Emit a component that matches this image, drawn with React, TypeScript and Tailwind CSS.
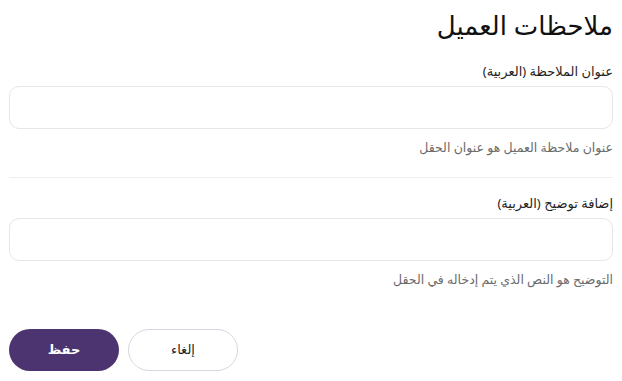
import React from "react";

const FONT = { fontFamily: '"Noto Sans", "DejaVu Sans", sans-serif' };

function Field({ label, hint }: { label: string; hint: string }) {
  return (
    <div className="flex flex-col">
      <label className="text-[13px] leading-[18px] text-[#1f1f1f]">{label}</label>
      <input
        type="text"
        className="mt-[6px] h-[43px] w-full rounded-[10px] border border-[#e6e6e6] bg-white px-3 outline-none"
      />
      <p className="mt-[10px] text-[12.5px] leading-[18px] text-[#6b6b6b]">{hint}</p>
    </div>
  );
}

export default function App() {
  return (
    <div dir="rtl" style={FONT} className="min-h-screen w-full bg-white px-[9px] pt-[8px]">
      <h1 className="text-[26px] leading-[34px] font-normal text-[#111]">ملاحظات العميل</h1>

      <div className="mt-[20px]">
        <Field label="عنوان الملاحظة (العربية)" hint="عنوان ملاحظة العميل هو عنوان الحقل" />
      </div>

      <div className="mt-[20px] h-px w-full bg-[#f0f0f0]" />

      <div className="mt-[16px]">
        <Field label="إضافة توضيح (العربية)" hint="التوضيح هو النص الذي يتم إدخاله في الحقل" />
      </div>

      <div dir="ltr" className="mt-[40px] flex items-center gap-[9px]">
        <button className="h-[42px] w-[110px] rounded-full bg-[#4b3470] text-[13px] font-bold text-white">
          حفظ
        </button>
        <button className="h-[42px] w-[110px] rounded-full border border-[#d9d6e0] bg-white text-[13px] text-[#1f1f1f]">
          إلغاء
        </button>
      </div>
    </div>
  );
}
